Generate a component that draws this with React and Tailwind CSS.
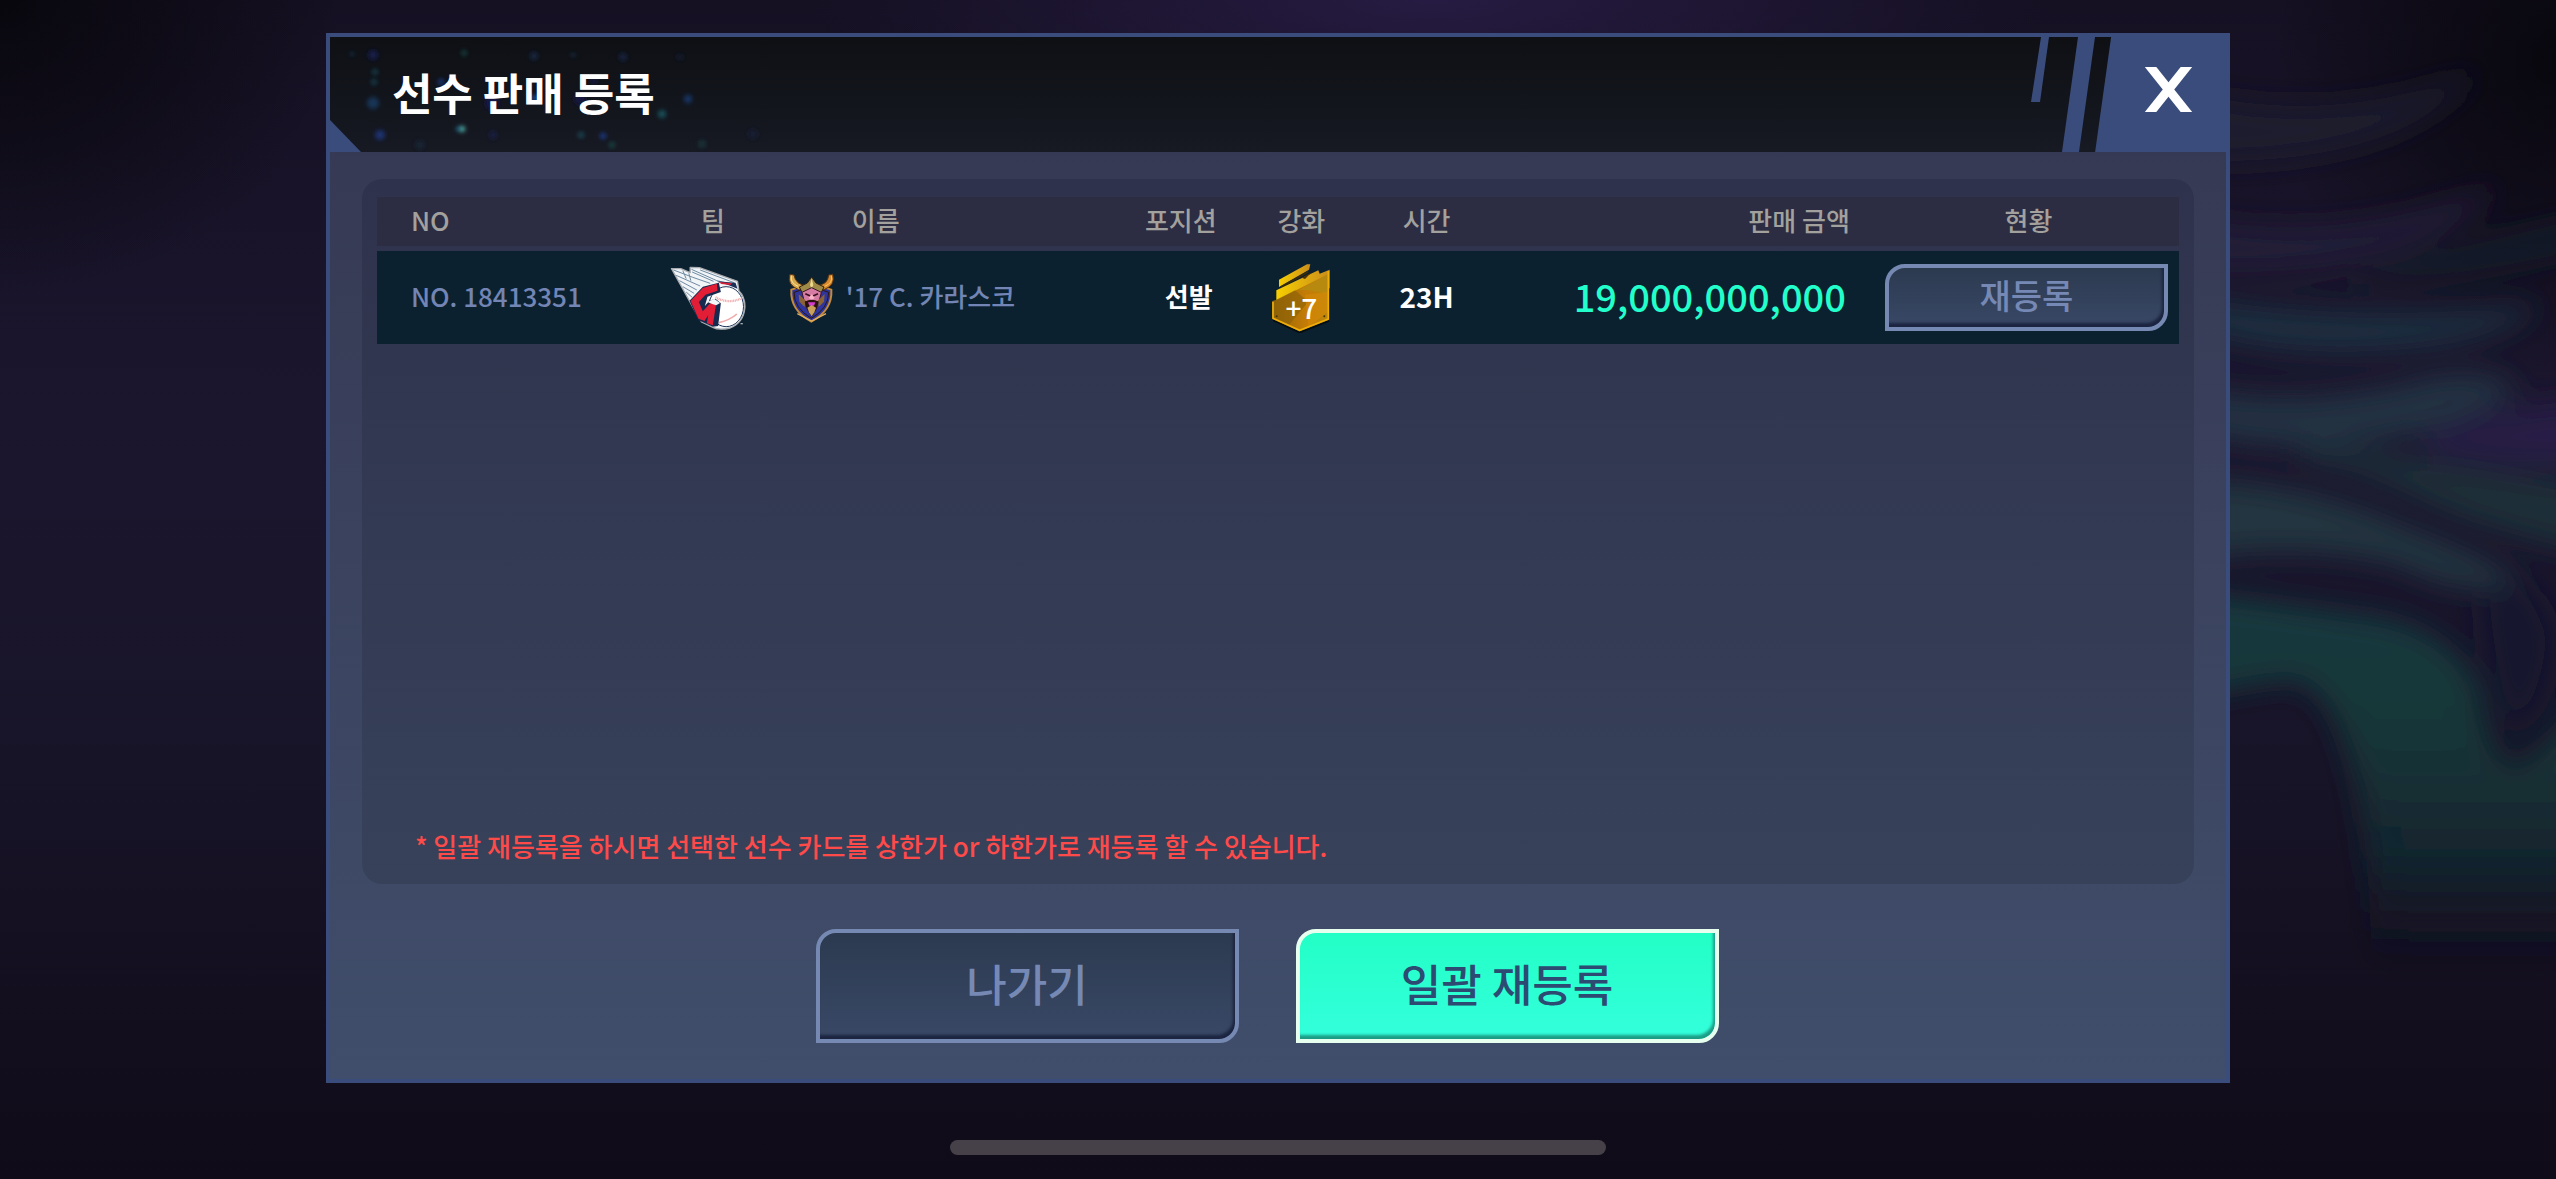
import React from "react";

const KR = "font-['Noto_Sans_CJK_KR',sans-serif]";

function Backdrop() {
  return (
    <svg
      className="absolute inset-0 h-full w-full"
      viewBox="0 0 2556 1179"
      preserveAspectRatio="xMidYMid slice"
      aria-hidden="true"
    >
      <defs>
        <linearGradient id="sky" x1="0" y1="0" x2="0" y2="1">
          <stop offset="0" stopColor="#151022" />
          <stop offset="0.35" stopColor="#1b162e" />
          <stop offset="0.65" stopColor="#181428" />
          <stop offset="1" stopColor="#0f0b18" />
        </linearGradient>
        <radialGradient id="corner">
          <stop offset="0" stopColor="#07060b" stopOpacity="0.9" />
          <stop offset="1" stopColor="#07060b" stopOpacity="0" />
        </radialGradient>
        <radialGradient id="violet">
          <stop offset="0" stopColor="#261b42" />
          <stop offset="1" stopColor="#261b42" stopOpacity="0" />
        </radialGradient>
        <linearGradient id="arch" x1="0" y1="600" x2="0" y2="970" gradientUnits="userSpaceOnUse">
          <stop offset="0" stopColor="#183a3e" />
          <stop offset="0.35" stopColor="#163638" />
          <stop offset="0.7" stopColor="#132830" stopOpacity="0.85" />
          <stop offset="1" stopColor="#12121f" stopOpacity="0" />
        </linearGradient>
        <filter id="soft" filterUnits="userSpaceOnUse" x="2100" y="0" width="600" height="1179">
          <feGaussianBlur stdDeviation="14" />
        </filter>
      </defs>
      <rect width="2556" height="1179" fill="url(#sky)" />
      <ellipse cx="1430" cy="0" rx="620" ry="140" fill="url(#violet)" />
      <ellipse cx="0" cy="0" rx="340" ry="300" fill="url(#corner)" />
      <ellipse cx="2556" cy="60" rx="280" ry="320" fill="url(#corner)" />
      <g filter="url(#soft)">
        <path d="M2180 90 Q2330 130 2480 70 Q2400 170 2180 160 Z" fill="#1a1c2f" />
        <path d="M2180 215 Q2330 250 2500 185 Q2420 285 2180 270 Z" fill="#201a38" />
        <path d="M2360 275 Q2480 240 2600 215 V245 Q2480 275 2360 285 Z" fill="#151c2a" />
        <path d="M2180 295 Q2340 325 2540 305 Q2500 350 2340 352 Q2240 350 2180 325 Z" fill="#1f2f40" />
        <path d="M2180 385 Q2280 410 2400 385 Q2480 360 2520 390 Q2450 435 2340 445 Q2240 450 2180 425 Z" fill="#203242" />
        <path d="M2300 440 Q2440 465 2600 485 V555 Q2480 530 2420 500 Q2360 470 2300 460 Z" fill="#1b2e39" />
        <path d="M2420 440 Q2480 405 2600 400 V465 Q2500 470 2420 450 Z" fill="#281d45" />
        <path d="M2180 480 Q2300 480 2400 525 Q2480 555 2520 580 Q2470 600 2400 565 Q2300 540 2180 560 Z" fill="#20343f" />
        <path
          d="M2160 590 Q2290 605 2360 615 Q2450 625 2478 690 Q2490 765 2515 765 Q2545 755 2600 680 L2660 680 V1010 H2372 Q2372 840 2352 770 Q2330 682 2290 680 Q2250 682 2160 705 Z"
          fill="url(#arch)"
        />
        <path d="M2480 600 Q2530 550 2556 640 Q2545 720 2510 730 Q2488 690 2480 600 Z" fill="#15162f" />
      </g>
    </svg>
  );
}

const SPARKS = [
  [22, 17, 2, "#14344c"], [43, 18, 5, "#161a4a"], [45, 35, 3, "#143a4a"], [44, 45, 3, "#143a4a"],
  [43, 66, 6, "#153656"], [50, 98, 5, "#1a3270"], [111, 45, 3, "#1a3880"], [134, 16, 3, "#173a3c"],
  [132, 92, 3, "#52b8ae"], [128, 92, 2, "#1f6f9e"], [204, 19, 4, "#142640"], [243, 18, 2, "#153450"],
  [162, 66, 7, "#15184a"], [205, 61, 3, "#1d55a0"], [163, 98, 4, "#171c40"], [251, 98, 3, "#1a4a56"],
  [273, 99, 3, "#1c3a8c"], [282, 108, 3, "#1a4542"], [293, 20, 4, "#13223c"], [358, 62, 4, "#193668"],
  [332, 77, 4, "#185058"], [250, 62, 6, "#141740"], [264, 44, 3, "#171c4c"], [372, 107, 4, "#173034"],
  [423, 97, 5, "#161f30"], [90, 108, 5, "#172230"], [350, 20, 3, "#131f32"],
];

function TitleBar() {
  return (
    <header className="relative flex h-[115px] items-stretch bg-gradient-to-b from-[#0e1014] to-[#171923]">
      <svg className="absolute left-0 top-0 h-full w-[500px]" viewBox="0 0 500 115" aria-hidden="true">
        <defs>
          <filter id="spark" x="-100%" y="-100%" width="300%" height="300%">
            <feGaussianBlur stdDeviation="2" />
          </filter>
        </defs>
        {SPARKS.map(([x, y, r, c], i) => (
          <circle key={i} cx={x} cy={y} r={r} fill={c} filter="url(#spark)" />
        ))}
        <path d="M0 83 L31 115 L0 115 Z" fill="#3a4c7b" />
      </svg>
      <h1 className="relative flex flex-1 items-center pb-1.5 pl-[62px] text-[44px] font-bold leading-none text-white">
        선수 판매 등록
      </h1>
      <svg className="h-full w-[64px]" viewBox="0 0 64 115" aria-hidden="true">
        <path d="M10 0 H18 L9 65 H0 Z" fill="#3a4c7b" />
        <path d="M47 0 H64 L48 115 H31 Z" fill="#3a4c7b" />
      </svg>
      <button
        type="button"
        aria-label="닫기"
        className="flex w-[131px] items-center justify-center bg-[#3a4c7b] pb-[10px] pl-4 [clip-path:polygon(16px_0,100%_0,100%_100%,0_100%)]"
      >
        <svg className="h-[45px] w-[49px]" viewBox="0 0 49 45" aria-hidden="true">
          <g stroke="#fff" strokeWidth="9">
            <path d="M3 -4.5 L46 49.5" />
            <path d="M46 -4.5 L3 49.5" />
          </g>
        </svg>
      </button>
    </header>
  );
}

function TeamLogo() {
  return (
    <svg className="h-[64px] w-[77px]" viewBox="60 52 230 192" role="img" aria-label="클리블랜드">
      <path
        d="M64 60 L92 60 L120 72 L120 56 L148 57 L262 98 L266 126 Q286 146 284 178 Q280 222 240 238 Q206 246 188 236 L154 220 L136 190 L92 110 Z"
        fill="#f2f5f7" stroke="#a9adb2" strokeWidth="4" strokeLinejoin="round"
      />
      <g fill="none" stroke="#6e8ba3" strokeWidth="3">
        <path d="M70 64 L128 86 L180 104" />
        <path d="M78 80 L150 112" />
        <path d="M88 96 L140 124" />
        <path d="M98 114 L132 134" />
        <path d="M108 130 L126 146" />
        <path d="M124 62 L200 96 L250 108" />
        <path d="M126 70 L190 98" />
        <path d="M150 64 L252 102" />
        <path d="M98 66 L108 90 M116 74 L122 96" />
      </g>
      <path d="M200 98 L256 102 L262 120 L236 110 Z" fill="#1d3158" />
      <path d="M204 100 L246 104 L240 109 L214 106 Z" fill="#d81f35" />
      <ellipse cx="228" cy="174" rx="52" ry="60" fill="#fff" stroke="#20365c" strokeWidth="3" />
      <path
        d="M206 102 L158 114 L118 156 L144 214 L188 234 L204 232 L212 164 L196 150 L178 156 L164 172 L172 144 L212 130 Z"
        fill="#16294f"
      />
      <path
        d="M200 105 L158 118 L121 157 L145 210 L163 217 L174 200 L170 224 L188 230 L198 164 L180 164 L158 188 L146 160 L166 138 L202 126 Z"
        fill="#e21d36"
      />
      <path d="M172 160 L192 150 L210 163 L198 170 L186 166 Z" fill="#f4f6f8" />
      <g fill="none" stroke="#f0a9ab">
        <path d="M196 146 Q236 168 276 148" strokeWidth="7" strokeDasharray="3 2" />
        <path d="M206 222 Q240 214 260 196" strokeWidth="5" />
      </g>
      <path d="M271 225 h7" stroke="#a9adb2" strokeWidth="4" />
    </svg>
  );
}

function SkillCrest() {
  return (
    <svg className="h-[50px] w-[46px]" viewBox="412 68 138 150" role="img" aria-label="시그니처">
      <path d="M422 118 L482 100 L542 118 Q546 180 482 214 Q418 180 422 118 Z" fill="#2f359c" stroke="#c28a3a" strokeWidth="6" />
      <path d="M430 126 L482 108 L534 126 Q534 174 482 204 Q430 174 430 126 Z" fill="none" stroke="#2a160f" strokeWidth="3" />
      <path d="M418 72 Q408 104 444 118 L466 122 L470 106 Q434 104 430 74 Z" fill="#d9a94f" stroke="#5a3412" strokeWidth="3" />
      <path d="M546 72 Q556 104 520 118 L500 122 L496 106 Q532 104 534 74 Z" fill="#d98a2e" stroke="#5a3412" strokeWidth="3" />
      <path d="M422 76 Q418 98 442 108" fill="none" stroke="#fbe6a0" strokeWidth="3" />
      <path d="M542 76 Q548 98 522 108" fill="none" stroke="#ffc65c" strokeWidth="3" />
      <path d="M446 110 L470 98 L483 80 L496 98 L520 110 L510 130 L483 118 L456 130 Z" fill="#a08a48" stroke="#2e2010" strokeWidth="3" />
      <path d="M483 84 L488 104 L483 114 L478 104 Z" fill="#efd98a" />
      <path d="M454 126 L483 112 L512 126 L506 150 L494 158 H472 L460 150 Z" fill="#d67ca4" stroke="#3a1626" strokeWidth="3" />
      <path d="M464 130 L479 137 M502 130 L487 137" stroke="#3a1020" strokeWidth="5" />
      <path d="M474 142 L483 132 L492 142 L483 150 Z" fill="#f6b4c6" />
      <path d="M444 132 L464 150 L462 170 L446 154 Z M522 132 L502 150 L504 170 L520 154 Z" fill="#8a6436" />
      <path d="M462 154 Q483 142 504 154 L498 176 L483 200 L468 176 Z" fill="#2b130d" />
      <path d="M472 156 H494 L490 166 H476 Z" fill="#d43ccf" />
      <path d="M470 172 L483 164 L496 172 L491 186 L483 198 L475 186 Z" fill="#caa05a" />
      <path d="M440 190 L483 212 L526 190" fill="none" stroke="#e0b060" strokeWidth="4" />
    </svg>
  );
}

function EnhanceBadge() {
  return (
    <div className="relative mx-auto h-[70px] w-[60px]">
      <svg className="h-full w-full" viewBox="38 34 180 210" aria-hidden="true">
        <defs>
          <linearGradient id="gold" x1="0" y1="0" x2="1" y2="0">
            <stop offset="0" stopColor="#946506" />
            <stop offset="0.6" stopColor="#c47c06" />
            <stop offset="1" stopColor="#bb860c" />
          </linearGradient>
          <linearGradient id="bright" x1="0" y1="0" x2="1" y2="0">
            <stop offset="0" stopColor="#f7cf00" />
            <stop offset="1" stopColor="#c98d1c" />
          </linearGradient>
        </defs>
        <path d="M44 206 L124 243 L212 208" fill="none" stroke="#060d12" strokeWidth="5" />
        <path d="M62 84 L146 38 L156 38 L152 54 L62 106 Z" fill="url(#bright)" />
        <path d="M68 106 L150 60" stroke="#3b2c08" strokeWidth="5" />
        <path d="M54 116 L120 84 L180 56 L184 66 L214 54 V110 L54 148 Z" fill="url(#bright)" />
        <path d="M130 78 L160 62 L140 82 Z" fill="#4d3208" />
        <path d="M42 148 L56 144 L212 66 V204 L124 239 L42 202 Z" fill="url(#gold)" />
        <path d="M120 116 L212 66 V134 Q170 110 120 116 Z" fill="#b8890f" />
        <path d="M42 150 L110 116 L150 150 L90 222 L42 200 Z" fill="#8b6108" opacity="0.6" />
        <path d="M140 130 L210 120 V180 L150 226 Z" fill="#dd8b06" opacity="0.45" />
        <path d="M44 150 V200 L124 236 L210 202 V58" fill="none" stroke="#f0ae08" strokeWidth="5" />
        <circle cx="55" cy="194" r="3" fill="#4b3206" />
        <circle cx="198" cy="194" r="3" fill="#4b3206" />
      </svg>
      <span className="absolute inset-x-0 bottom-2.5 text-center text-[28px] font-medium leading-8 text-white">+7</span>
    </div>
  );
}

const PLATE =
  "rounded-tl-[20px] rounded-br-[20px] border-4 text-center font-medium leading-none";
const DARK =
  "border-[#7689b2] bg-gradient-to-b from-[#2c3a50] to-[#394866] text-[#7689b5] shadow-[inset_-2px_-4px_3px_#1b2440]";

function Listings() {
  const th = "h-[49px] bg-[#2c2d42] p-0 pb-1 font-medium";
  const td = "h-[93px] bg-[#0c2130] p-0";
  return (
    <table className="w-full table-fixed border-separate border-spacing-0 text-[26px] font-medium leading-8">
      <colgroup>
        <col className="w-[14.5%]" />
        <col className="w-[8.3%]" />
        <col className="w-[18.9%]" />
        <col className="w-[6.7%]" />
        <col className="w-[5.8%]" />
        <col className="w-[8.1%]" />
        <col className="w-[20.1%]" />
        <col className="w-[17.6%]" />
      </colgroup>
      <thead className="text-[#a3a19e]">
        <tr className="text-center">
          <th className={`${th} pl-[34px] text-left`}>NO</th>
          <th className={th}>팀</th>
          <th className={`${th} pl-16 text-left`}>이름</th>
          <th className={`${th} pr-4`}>포지션</th>
          <th className={th}>강화</th>
          <th className={th}>시간</th>
          <th className={`${th} pr-3 text-right`}>판매 금액</th>
          <th className={`${th} pl-4`}>현황</th>
        </tr>
        <tr aria-hidden="true">
          <td colSpan={8} className="h-[5px] p-0" />
        </tr>
      </thead>
      <tbody className="text-white">
        <tr className="text-center">
          <td className={`${td} pb-1 pl-[34px] text-left text-[#7285b4]`}>NO. 18413351</td>
          <td className={`${td} pr-2`}>
            <div className="flex justify-center"><TeamLogo /></div>
          </td>
          <td className={`${td} text-left text-[#7285b4]`}>
            <div className="flex items-center gap-3">
              <SkillCrest />
              <span className="pb-1">'17 C. 카라스코</span>
            </div>
          </td>
          <td className={`${td} pb-1 font-bold`}>선발</td>
          <td className={td}><EnhanceBadge /></td>
          <td className={`${td} pb-1 text-[28px] font-bold`}>23H</td>
          <td className={`${td} pb-1 pr-4 text-right text-[38px] text-[#22ffcb]`}>19,000,000,000</td>
          <td className={`${td} pl-[23px] pr-[11px]`}>
            <button type="button" className={`${PLATE} ${DARK} block h-[67px] w-full pb-1.5 text-[34px]`}>
              재등록
            </button>
          </td>
        </tr>
      </tbody>
    </table>
  );
}

export default function App() {
  return (
    <main className={`relative flex min-h-screen flex-col items-center bg-[#151022] pt-[33px] ${KR}`}>
      <Backdrop />
      <section className="relative flex w-[74.5%] flex-col border-4 border-[#3a4c7b] bg-gradient-to-b from-[#353751] to-[#404e6b]">
        <TitleBar />
        <div className="mx-8 mt-[27px] flex min-h-[705px] flex-col justify-between rounded-[20px] bg-gradient-to-b from-[#2f324c] to-[#37425a] px-[15px] py-[18px]">
          <Listings />
          <p className="pb-1 pl-[38px] text-[26px] font-medium leading-8 text-[#ff4a4a]">
            * 일괄 재등록을 하시면 선택한 선수 카드를 상한가 or 하한가로 재등록 할 수 있습니다.
          </p>
        </div>
        <div className="flex justify-center gap-[57px] pb-9 pr-[22px] pt-[45px]">
          <button type="button" className={`${PLATE} ${DARK} h-[114px] w-[423px] pb-1.5 text-[44px]`}>
            나가기
          </button>
          <button
            type="button"
            className={`${PLATE} h-[114px] w-[423px] border-[#e6ffee] bg-gradient-to-b from-[#22ffc6] to-[#33ffdc] pb-1.5 text-[44px] text-[#2c4a72] shadow-[inset_-2px_-4px_3px_#1b9c85]`}
          >
            일괄 재등록
          </button>
        </div>
      </section>
      <div className="relative mb-6 mt-auto h-[15px] w-[25.7%] rounded-full bg-[#464049]" />
    </main>
  );
}
